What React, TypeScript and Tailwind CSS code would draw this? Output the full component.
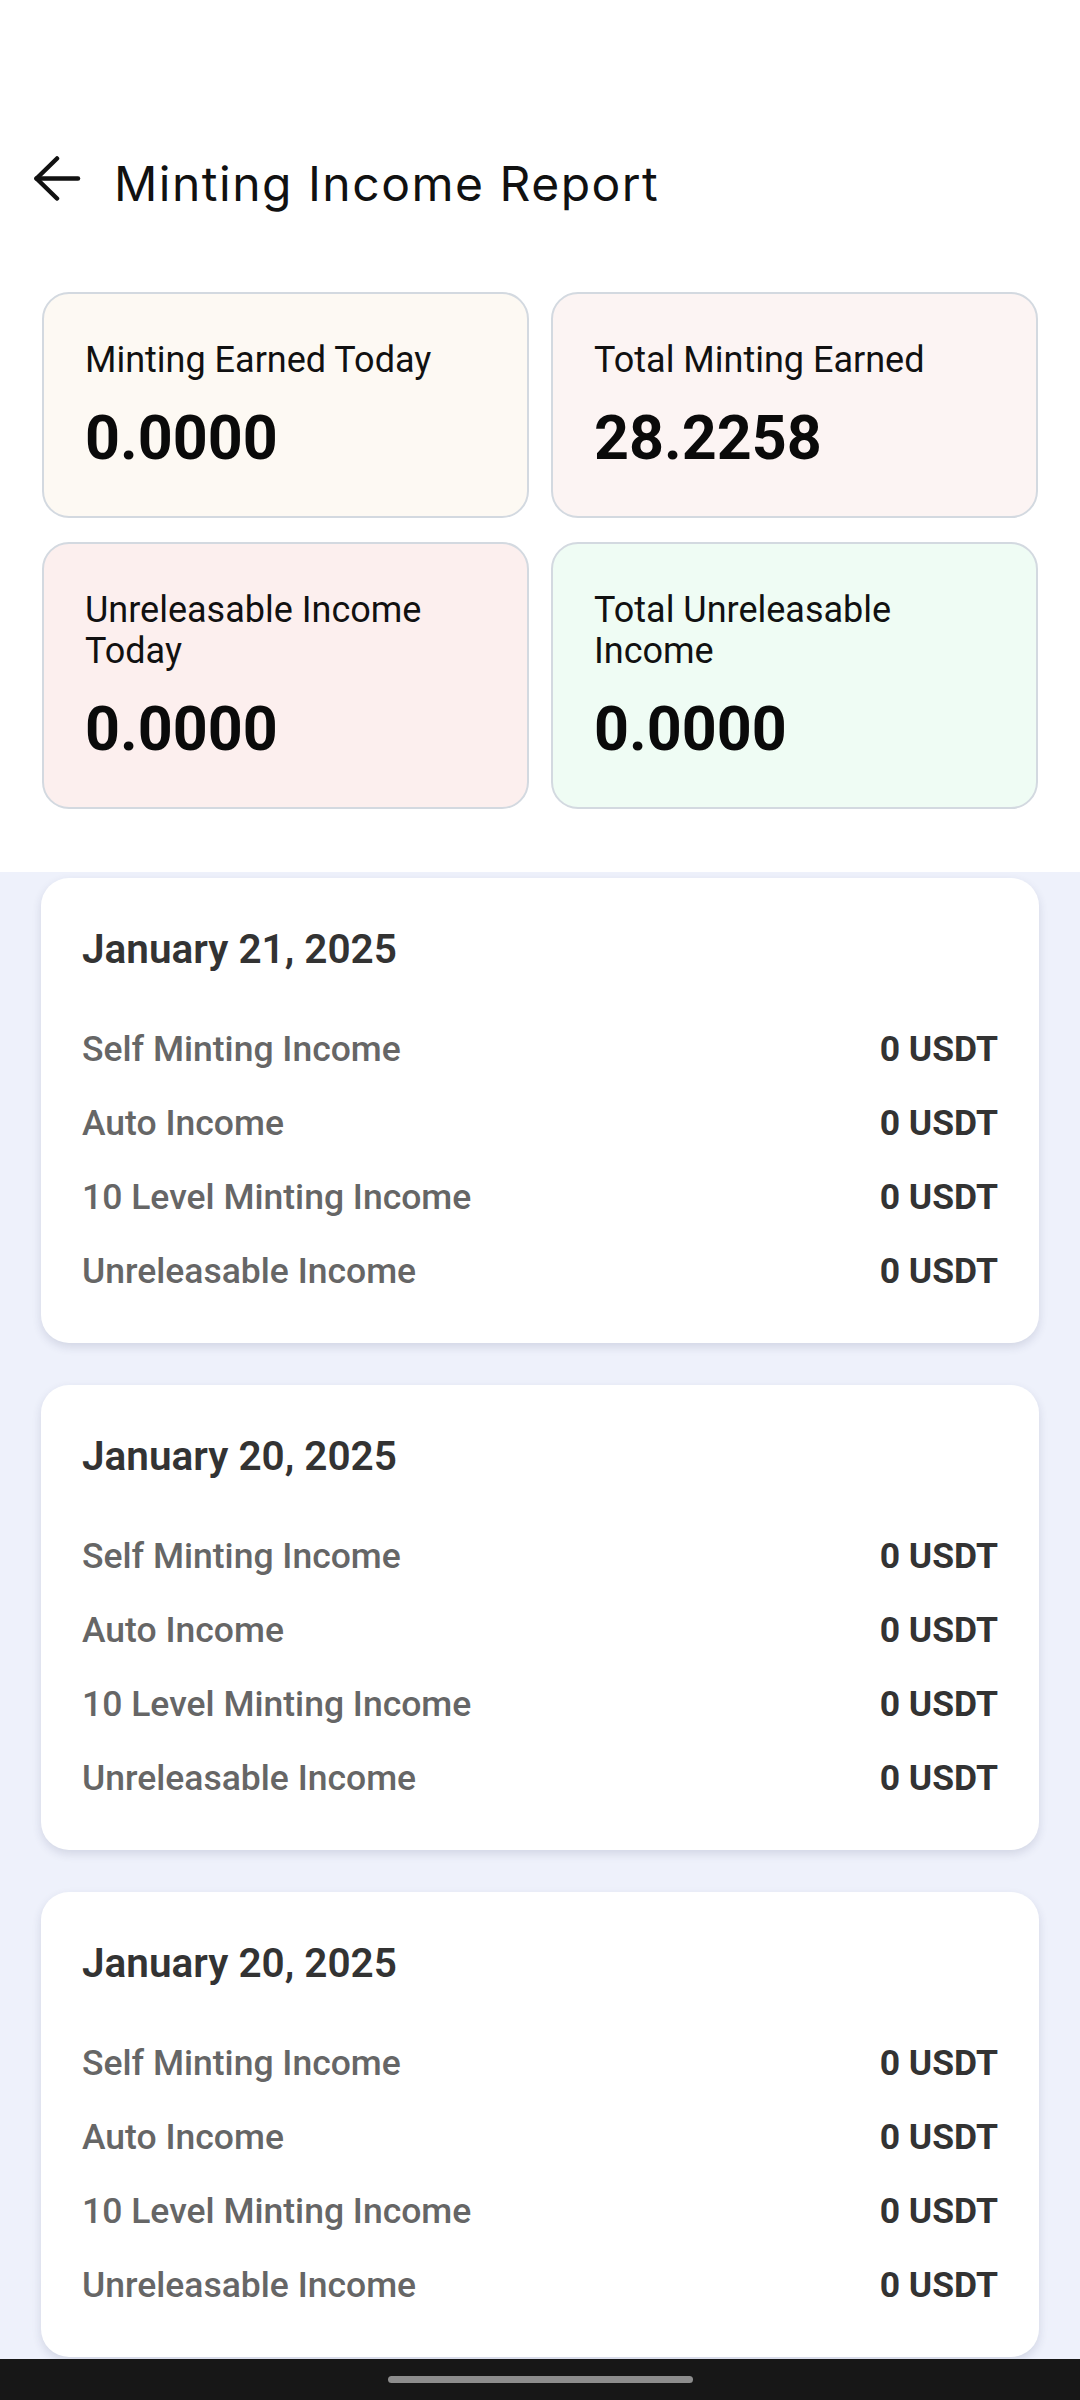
import React from "react";

type Stat = { label: string; value: string; bg: string };

const stats: Stat[] = [
  { label: "Minting Earned Today", value: "0.0000", bg: "bg-[#fdf9f3]" },
  { label: "Total Minting Earned", value: "28.2258", bg: "bg-[#fcf4f3]" },
  { label: "Unreleasable Income Today", value: "0.0000", bg: "bg-[#fcefee]" },
  { label: "Total Unreleasable Income", value: "0.0000", bg: "bg-[#effcf4]" },
];

const days = ["January 21, 2025", "January 20, 2025", "January 20, 2025"];
const rows = [
  "Self Minting Income",
  "Auto Income",
  "10 Level Minting Income",
  "Unreleasable Income",
];

function StatCard({ s }: { s: Stat }) {
  return (
    <div
      className={`${s.bg} rounded-[27px] border-2 border-[#d3d9e0] pl-[41px] pr-[30px] pt-[46px] pb-[41px] flex flex-col`}
    >
      <div className="text-[36px] leading-[41px] text-[#111111]">{s.label}</div>
      <div className="mt-[20px] text-[61px] leading-[74px] font-bold text-[#0a0a0a]">
        {s.value}
      </div>
    </div>
  );
}

function DayCard({ date }: { date: string }) {
  return (
    <div className="mx-[41px] h-[465px] shrink-0 rounded-[28px] bg-white shadow-[0_4px_10px_rgba(40,50,90,0.14)] px-[41px] pt-[48px]">
      <div className="text-[40.5px] leading-[46px] font-semibold text-[#333333]">{date}</div>
      <div className="mt-[57px] flex flex-col gap-[33px]">
        {rows.map((r) => (
          <div key={r} className="flex items-center justify-between h-[41px]">
            <span className="text-[35.5px] leading-[41px] font-medium text-[#666666]">{r}</span>
            <span className="text-[35.5px] leading-[41px] font-bold text-[#333333]">0 USDT</span>
          </div>
        ))}
      </div>
    </div>
  );
}

export default function App() {
  return (
    <div
      className="w-[1080px] h-[2400px] bg-white flex flex-col overflow-hidden"
      style={{ fontFamily: "Roboto, 'Noto Sans', sans-serif" }}
    >
      <div className="h-[136px] shrink-0" />
      <div className="h-[96px] shrink-0 flex items-center">
        <svg
          className="ml-[34px] shrink-0"
          width="48"
          height="56"
          viewBox="0 0 48 56"
          fill="none"
          stroke="#111111"
          strokeWidth="4.5"
          strokeLinecap="round"
          strokeLinejoin="round"
        >
          <path d="M23 2.5 L2.5 22.5 L23 42.5" />
          <path d="M2.5 22.5 H44" />
        </svg>
        <h1
          className="ml-[32px] text-[48px] leading-[56px] font-normal text-[#111111] tracking-[1.5px]"
          style={{ fontFamily: "Inter, 'Noto Sans', sans-serif" }}
        >
          Minting Income Report
        </h1>
      </div>

      <div className="mt-[60px] px-[42px] grid grid-cols-2 gap-x-[22px] gap-y-[24px] shrink-0">
        {stats.map((s) => (
          <StatCard key={s.label} s={s} />
        ))}
      </div>

      <div className="mt-[63px] flex-1 min-h-0 bg-[#eef1fb] pt-[6px] flex flex-col gap-[42px] overflow-hidden">
        {days.map((d, i) => (
          <DayCard key={i} date={d} />
        ))}
      </div>

      <div className="h-[41px] shrink-0 bg-[#171717] flex items-center justify-center">
        <div className="w-[305px] h-[7px] rounded-full bg-[#8d8d8d]" />
      </div>
    </div>
  );
}
